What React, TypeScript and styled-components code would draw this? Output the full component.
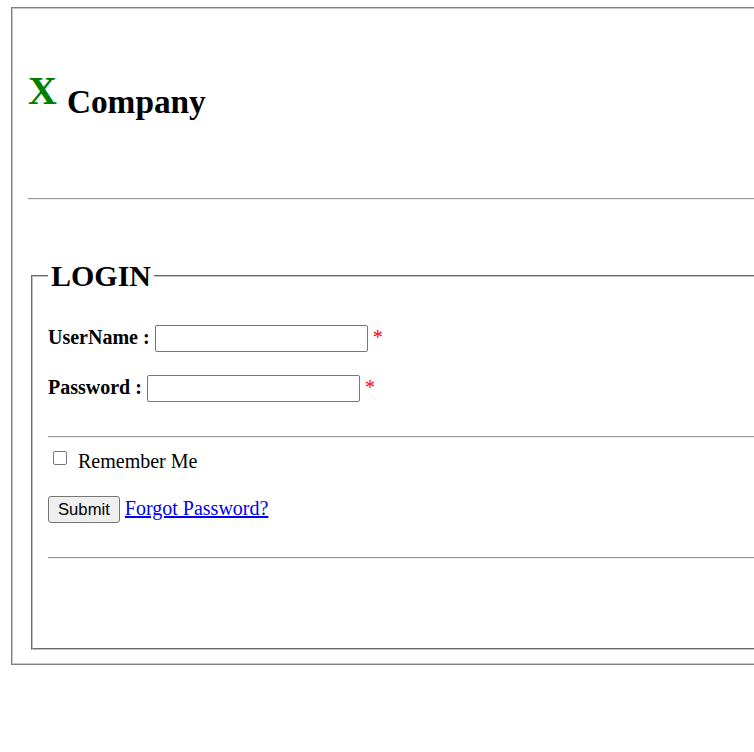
import React from "react";
import styled, { createGlobalStyle } from "styled-components";

const GlobalStyle = createGlobalStyle`
  html, body {
    margin: 0;
    padding: 0;
    overflow: hidden;
    background: #ffffff;
  }
  body {
    font-family: "Liberation Serif", "Times New Roman", serif;
    font-size: 20px;
    color: #000000;
  }
`;

const Page = styled.div`
  padding: 7px 0 0 11px;
`;

const Frame = styled.div`
  width: 1000px;
  border: 1px solid #808080;
  box-shadow: inset 0 0 0 1px #c6c6c6;
  padding: 0 0 14px 16px;
`;

const Brand = styled.h1`
  margin: 59px 0 0;
  font-size: 40px;
  font-weight: bold;
  line-height: normal;
  white-space: nowrap;
`;

const Mark = styled.span`
  color: #008000;
`;

const BrandName = styled.sub`
  font-size: 33.33px;
  vertical-align: -9px;
`;

const Rule = styled.hr<{ $mt: number; $mb: number }>`
  height: 0;
  border: 0;
  border-top: 1px solid #9a9a9a;
  border-bottom: 1px solid #eeeeee;
  margin: ${(p) => p.$mt}px 0 ${(p) => p.$mb}px;
`;

const LoginBox = styled.fieldset`
  margin: 59px 0 0 3px;
  padding: 32px 15px 78px 15px;
  border: 2px groove #c0c0c0;
  min-width: 0;
`;

const Title = styled.legend`
  padding: 0 3px;
  font-size: 30px;
  font-weight: bold;
  line-height: normal;
`;

const FormBody = styled.div`
  display: flex;
  flex-direction: column;
`;

const Row = styled.p`
  margin: 0 0 23px;
  line-height: normal;
  white-space: nowrap;
`;

const FieldLabel = styled.label`
  font-weight: bold;
`;

const TextInput = styled.input`
  box-sizing: border-box;
  width: 213px;
  height: 27px;
  margin: 0;
  padding: 1px 3px;
  border: 1px solid #767676;
  border-radius: 2px;
  background: #ffffff;
  font-family: "Liberation Sans", Arial, sans-serif;
  font-size: 16.67px;
  vertical-align: baseline;
`;

const Required = styled.span`
  color: #ff0000;
`;

const Check = styled.input`
  appearance: none;
  -webkit-appearance: none;
  box-sizing: border-box;
  width: 14px;
  height: 14px;
  margin: 3px 3px 3px 5px;
  border: 1px solid #767676;
  border-radius: 2px;
  background: #ffffff;
  vertical-align: baseline;
`;

const CheckText = styled.label`
  padding-left: 3px;
`;

const SubmitButton = styled.button`
  box-sizing: border-box;
  height: 27px;
  margin: 0;
  padding: 0 9px;
  border: 1px solid #767676;
  border-radius: 3px;
  background: #efefef;
  color: #000000;
  font-family: "Liberation Sans", Arial, sans-serif;
  font-size: 16.67px;
  vertical-align: baseline;
`;

const Link = styled.a`
  color: #0000ee;
  text-decoration: underline;
`;

export default function App() {
  return (
    <>
      <GlobalStyle />
      <Page>
        <Frame>
          <Brand>
            <Mark>X</Mark> <BrandName>Company</BrandName>
          </Brand>
          <Rule $mt={77} $mb={0} />
          <LoginBox>
            <Title>LOGIN</Title>
            <FormBody>
              <Row>
                <FieldLabel htmlFor="username">UserName :</FieldLabel>{" "}
                <TextInput id="username" type="text" /> <Required>*</Required>
              </Row>
              <Row>
                <FieldLabel htmlFor="password">Password :</FieldLabel>{" "}
                <TextInput id="password" type="password" /> <Required>*</Required>
              </Row>
              <Rule $mt={11} $mb={10} />
              <Row>
                <Check id="remember" type="checkbox" /> <CheckText htmlFor="remember">Remember Me</CheckText>
              </Row>
              <Row>
                <SubmitButton type="submit">Submit</SubmitButton>{" "}
                <Link href="#">Forgot Password?</Link>
              </Row>
              <Rule $mt={11} $mb={11} />
            </FormBody>
          </LoginBox>
        </Frame>
      </Page>
    </>
  );
}
